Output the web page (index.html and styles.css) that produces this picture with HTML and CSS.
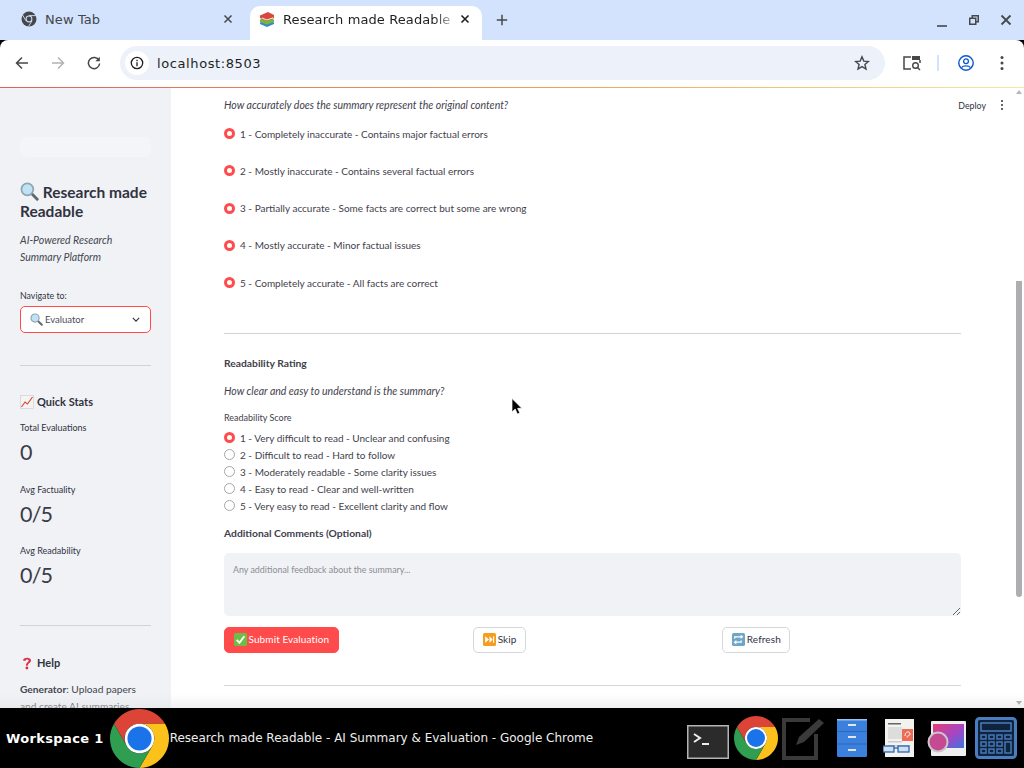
FILE: index.html
```html
<!DOCTYPE html>
<html lang="en">
<head>
<meta charset="utf-8">
<title>Research made Readable</title>
<link rel="stylesheet" href="styles.css">
</head>
<body>
<svg class="defs" width="0" height="0" aria-hidden="true">
  <symbol id="chrome" viewBox="2 2 44 44">
    <path fill="#db4437" d="M4.95 13A22 22 0 0 1 43.05 13H24A11 11 0 0 0 14.47 29.5Z"/>
    <path fill="#fcc11a" d="M43.05 13A22 22 0 0 1 24 46L33.53 29.5A11 11 0 0 0 24 13Z"/>
    <path fill="#2f9e50" d="M4.95 13L14.47 29.5A11 11 0 0 0 33.53 29.5L24 46A22 22 0 0 1 4.95 13Z"/>
    <circle cx="24" cy="24" r="11" fill="#fff"/>
    <circle cx="24" cy="24" r="9" fill="#1a73e8"/>
  </symbol>
  <symbol id="lens" viewBox="0 0 16 16">
    <path d="M9.5 9.5L14.5 14.5" stroke="#5d6a72" stroke-width="2.4" stroke-linecap="round"/>
    <circle cx="6.2" cy="6.2" r="5" fill="#bfe3f5" stroke="#8fa5b0" stroke-width="1.4"/>
  </symbol>
</svg>
<div class="screen">
  <header class="tabstrip">
    <div class="tab">
      <svg class="favicon" viewBox="0 0 16 16"><circle cx="8" cy="8" r="7.5" fill="#45474a"/><circle cx="8" cy="8" r="3.4" fill="#d3e3fd"/><circle cx="8" cy="8" r="2.4" fill="#45474a"/><path d="M8 4.6H15M5 9.8L1.6 4M11 9.8L7.5 15.5" stroke="#d3e3fd" stroke-width=".9"/></svg>
      <span class="tab-title">New Tab</span>
      <svg class="tab-x" viewBox="0 0 10 10"><path d="M1.5 1.5L8.5 8.5M8.5 1.5L1.5 8.5" stroke="#45474a" stroke-width="1.5"/></svg>
    </div>
    <div class="tab tab-active">
      <svg class="favicon" viewBox="0 0 16 16"><path fill="#2f8fc4" d="M1 11.5L8 9l7 2.5V13l-7 3-7-3z"/><path fill="#7cb342" d="M1 8.5L8 6l7 2.5V11l-7 2.5L1 11z"/><path fill="#d8473b" d="M1 4.5L9 1l6 3v3l-7 3-7-3z"/><path fill="#eee" d="M3 6.6l5 2 6-2.400v1l-6 2.400-5-2z"/></svg>
      <span class="tab-title tab-title-fade">Research made Readable</span>
      <svg class="tab-x" viewBox="0 0 10 10"><path d="M1.500 1.500L8.500 8.500M8.500 1.500L1.500 8.500" stroke="#1f1f1f" stroke-width="1.600"/></svg>
    </div>
    <svg class="newtab" viewBox="0 0 12 12"><path d="M6 .8V11.200M.8 6H11.200" stroke="#45474a" stroke-width="1.500"/></svg>
    <div class="winctl">
      <svg viewBox="0 0 12 12"><path d="M1 12H11" stroke="#45474a" stroke-width="1.600"/></svg>
      <svg viewBox="0 0 12 12"><path d="M3.500 1H11V8.500H8.500V11H1V3.500H3.500ZM5 2.500V3.500H8.500V7H9.500V2.500ZM2.500 5V9.500H7V5Z" fill="#45474a" fill-rule="evenodd"/></svg>
      <svg viewBox="0 0 12 12"><path d="M1.500 1.500L10.500 10.500M10.500 1.500L1.500 10.500" stroke="#45474a" stroke-width="1.800"/></svg>
    </div>
  </header>

  <nav class="toolbar">
    <svg class="tool" viewBox="0 0 14 14"><path d="M13 7H2M7 1.500L1.500 7 7 12.500" fill="none" stroke="#45474a" stroke-width="1.500"/></svg>
    <svg class="tool" viewBox="0 0 14 14"><path d="M1 7H12M7 1.500L12.500 7 7 12.500" fill="none" stroke="#b0b2b5" stroke-width="1.500"/></svg>
    <svg class="tool" viewBox="0 0 14 14"><path d="M12 4.500A5.600 5.600 0 1 0 12.600 7.500" fill="none" stroke="#45474a" stroke-width="1.500"/><path d="M12.800 .8V5.300H8.300Z" fill="#45474a"/></svg>
    <div class="omnibox">
      <span class="info"><svg viewBox="0 0 14 14"><circle cx="7" cy="7" r="5.700" fill="none" stroke="#1f1f1f" stroke-width="1.300"/><path d="M7 6.200V10.200M7 3.800V5.200" stroke="#1f1f1f" stroke-width="1.300"/></svg></span>
      <span class="url">localhost:8503</span>
      <svg class="star" viewBox="0 0 16 16"><path d="M8 1.800L9.800 6.100 14.400 6.500 10.900 9.500 12 14 8 11.600 4 14 5.100 9.500 1.600 6.500 6.200 6.100Z" fill="none" stroke="#45474a" stroke-width="1.400"/></svg>
    </div>
    <svg class="tool-cast" viewBox="0 0 18 16"><path d="M8 2H1V14H8" fill="none" stroke="#45474a" stroke-width="1.500"/><path d="M9 1H17V5H9Z" fill="#45474a"/><path d="M17 5V8" stroke="#45474a" stroke-width="1.500"/><circle cx="12.500" cy="10.500" r="2.800" fill="none" stroke="#45474a" stroke-width="1.400"/><path d="M14.500 12.500L17 15" stroke="#45474a" stroke-width="1.400"/></svg>
    <span class="tool-sep"></span>
    <svg class="tool-avatar" viewBox="0 0 16 16"><circle cx="8" cy="8" r="7.200" fill="none" stroke="#0b57d0" stroke-width="1.400"/><circle cx="8" cy="6.300" r="2.400" fill="none" stroke="#0b57d0" stroke-width="1.300"/><path d="M3.500 12.600C5 10.400 11 10.400 12.500 12.600" fill="none" stroke="#0b57d0" stroke-width="1.300"/></svg>
    <svg class="tool-menu" viewBox="0 0 4 16"><circle cx="2" cy="2.500" r="1.500" fill="#45474a"/><circle cx="2" cy="8" r="1.500" fill="#45474a"/><circle cx="2" cy="13.500" r="1.500" fill="#45474a"/></svg>
  </nav>

  <div class="viewport">
    <div class="decoration"></div>
    <aside class="sidebar">
      <div class="skeleton"></div>
      <h1 class="brand"><svg class="emoji-lg"><use href="#lens"/></svg> Research made Readable</h1>
      <p class="tagline">AI-Powered Research Summary Platform</p>
      <div class="field-label">Navigate to:</div>
      <div class="select">
        <svg class="emoji"><use href="#lens"/></svg>
        <span class="select-value">Evaluator</span>
        <svg class="chev" viewBox="0 0 10 6"><path d="M1 1L5 5 9 1" fill="none" stroke="#31333f" stroke-width="1.400"/></svg>
      </div>
      <hr class="rule side-rule-a">
      <h2 class="side-head side-head-stats"><svg class="emoji-md" viewBox="0 0 14 14"><rect x=".5" y=".5" width="13" height="13" fill="#f4f4f4" stroke="#ccc" stroke-width=".6"/><path d="M1.500 12L5 7 7.500 9 12.500 2" fill="none" stroke="#e0483c" stroke-width="1.200"/></svg> Quick Stats</h2>
      <div class="metric"><div class="metric-label">Total Evaluations</div><div class="metric-value">0</div></div>
      <div class="metric"><div class="metric-label">Avg Factuality</div><div class="metric-value">0/5</div></div>
      <div class="metric"><div class="metric-label">Avg Readability</div><div class="metric-value">0/5</div></div>
      <hr class="rule side-rule-b">
      <h2 class="side-head side-head-help"><svg class="emoji-md" viewBox="0 0 14 14"><path d="M3 4.500C3 1 11 .5 11 4.500 11 7 7.800 7 7.800 9.800H6C6 6.500 8.600 6.500 8.600 4.600 8.600 3 5.500 3 5.300 5Z" fill="#dd2e44"/><circle cx="6.900" cy="12" r="1.400" fill="#dd2e44"/></svg> Help</h2>
      <p class="help"><b>Generator</b>: Upload papers and create AI summaries</p>
    </aside>

    <main class="main">
      <div class="topbar"><span>Deploy</span><svg viewBox="0 0 4 12"><circle cx="2" cy="2" r="1" fill="#31333f"/><circle cx="2" cy="6" r="1" fill="#31333f"/><circle cx="2" cy="10" r="1" fill="#31333f"/></svg></div>
      <div class="content">
        <p class="question">How accurately does the summary represent the original content?</p>
        <ul class="radios radios-loose">
          <li><span class="radio radio-on"></span>1 - Completely inaccurate - Contains major factual errors</li>
          <li><span class="radio radio-on"></span>2 - Mostly inaccurate - Contains several factual errors</li>
          <li><span class="radio radio-on"></span>3 - Partially accurate - Some facts are correct but some are wrong</li>
          <li><span class="radio radio-on"></span>4 - Mostly accurate - Minor factual issues</li>
          <li><span class="radio radio-on"></span>5 - Completely accurate - All facts are correct</li>
        </ul>
        <hr class="rule main-rule-a">
        <h3 class="section">Readability Rating</h3>
        <p class="question question-b">How clear and easy to understand is the summary?</p>
        <div class="score-label">Readability Score</div>
        <ul class="radios radios-tight">
          <li><span class="radio radio-on"></span>1 - Very difficult to read - Unclear and confusing</li>
          <li><span class="radio"></span>2 - Difficult to read - Hard to follow</li>
          <li><span class="radio"></span>3 - Moderately readable - Some clarity issues</li>
          <li><span class="radio"></span>4 - Easy to read - Clear and well-written</li>
          <li><span class="radio"></span>5 - Very easy to read - Excellent clarity and flow</li>
        </ul>
        <h3 class="section section-comments">Additional Comments (Optional)</h3>
        <textarea class="comments" placeholder="Any additional feedback about the summary..."></textarea>
        <div class="actions">
          <div><button class="btn btn-primary"><svg class="emoji" viewBox="0 0 12 12"><rect width="12" height="12" rx="1.500" fill="#6cbf45"/><path d="M2.500 6.300L5 9 9.500 3" fill="none" stroke="#fff" stroke-width="1.800"/></svg>Submit Evaluation</button></div>
          <div><button class="btn"><svg class="emoji" viewBox="0 0 12 12"><rect width="12" height="12" rx="1.500" fill="#f59d1e"/><path d="M2 3L5.500 6 2 9ZM6 3L9 6 6 9Z" fill="#fff"/><path d="M9.800 3V9" stroke="#fff" stroke-width="1"/></svg>Skip</button></div>
          <div><button class="btn"><svg class="emoji" viewBox="0 0 12 12"><rect width="12" height="12" rx="1.500" fill="#6fa6c7"/><path d="M2.500 5V3.500H8.500M8.500 7V8.500H3.500" fill="none" stroke="#fff" stroke-width="1.200"/><path d="M8 1.500L10.500 3.500 8 5.500ZM4 6.500L1.500 8.500 4 10.500Z" fill="#fff"/></svg>Refresh</button></div>
        </div>
        <hr class="rule main-rule-b">
      </div>
      <div class="scrollbar">
        <span class="arrow arrow-up"></span>
        <span class="thumb"></span>
        <span class="arrow arrow-down"></span>
      </div>
    </main>
    <div class="fade"></div>
    <svg class="cursor" viewBox="0 0 11 17"><path d="M1 .5V14L4.200 11 6.400 16 8.800 15 6.600 10.300H10.800Z" fill="#000" stroke="#fff" stroke-width=".7"/></svg>
  </div>

  <footer class="taskbar">
    <span class="workspace">Workspace 1</span>
    <svg class="task-chrome"><use href="#chrome"/></svg>
    <span class="task-title">Research made Readable - AI Summary &amp; Evaluation - Google Chrome</span>
    <div class="dock">
      <svg class="d-term" viewBox="0 0 42 34"><rect x=".5" y=".5" width="41" height="33" rx="1" fill="#2b2b2b" stroke="#b4b4b4" stroke-width="2"/><path d="M7 9L13 13 7 17" fill="none" stroke="#eee" stroke-width="2"/><path d="M15 19H22" stroke="#eee" stroke-width="2"/></svg>
      <svg class="d-chrome"><use href="#chrome"/></svg>
      <svg class="d-note" viewBox="0 0 44 44"><path d="M28 4H2V42H34V18" fill="none" stroke="#3a3a3a" stroke-width="4"/><path d="M14 29L17 21 37 3 42 7 22 26Z" fill="#3a3a3a"/></svg>
      <svg class="d-files" viewBox="0 0 30 38"><rect width="30" height="38" rx="1.500" fill="#3a80dc"/><rect y="0" width="30" height="1.500" fill="#9cc1f0"/><path d="M0 12.500H30M0 25H30" stroke="#2a68bd" stroke-width="1"/><rect x="11" y="5" width="8" height="2" fill="#dfe6ee"/><rect x="11" y="17" width="8" height="2" fill="#dfe6ee"/><rect x="11" y="30" width="8" height="2" fill="#dfe6ee"/></svg>
      <svg class="d-doc" viewBox="0 0 32 38"><rect x="2" width="29" height="38" fill="#f2f2ef"/><rect x="5" y="4" width="13" height="1.500" fill="#666"/><rect x="5" y="8" width="14" height="12" fill="#ddd"/><rect x="19" y="10" width="11" height="12" fill="#ee6b55"/><path d="M22 17C22 12 27 12 27 15 27 17 23 17 24 18.500" fill="none" stroke="#fff" stroke-width="1"/><rect x="5" y="22" width="14" height="1.500" fill="#ccc"/><rect x="5" y="26" width="22" height="1.500" fill="#ccc"/><rect x="0" y="27" width="11" height="6" fill="#cfe0f2" stroke="#2d64b0" stroke-width="1.300"/><rect x="15" y="27" width="11" height="6" fill="#cfe0f2" stroke="#2d64b0" stroke-width="1.300"/><path d="M11 29H15" stroke="#2d64b0" stroke-width="1.300"/></svg>
      <svg class="d-image" viewBox="0 0 39 36"><defs><linearGradient id="imgbg" x1="0" y1="0" x2="1" y2="1"><stop offset="0" stop-color="#e63d76"/><stop offset=".55" stop-color="#a546c4"/><stop offset="1" stop-color="#3a74de"/></linearGradient></defs><rect x="4" y="1" width="35" height="35" rx="1" fill="#f0f0f0"/><rect x="6" y="4" width="31" height="24" fill="url(#imgbg)"/><circle cx="11" cy="22" r="10.500" fill="#c9c9c9"/><circle cx="11" cy="22" r="8.500" fill="#c54a92"/></svg>
      <svg class="d-calc" viewBox="0 0 42 42"><rect x="1.500" y="1.500" width="39" height="39" rx="3" fill="#10233d" stroke="#4a7cc0" stroke-width="3"/><rect x="6" y="6" width="30" height="8" fill="none" stroke="#4a7cc0" stroke-width="1.500"/><g fill="none" stroke="#4a7cc0" stroke-width="1.400"><rect x="6" y="18" width="5" height="4"/><rect x="14" y="18" width="5" height="4"/><rect x="22" y="18" width="5" height="4"/><rect x="30" y="18" width="6" height="4"/><rect x="6" y="25" width="5" height="4"/><rect x="14" y="25" width="5" height="4"/><rect x="22" y="25" width="5" height="4"/><rect x="30" y="25" width="6" height="11"/><rect x="6" y="32" width="5" height="4"/><rect x="14" y="32" width="5" height="4"/><rect x="22" y="32" width="5" height="4"/></g></svg>
    </div>
  </footer>
</div>
</body>
</html>
```

FILE: styles.css
```css
* { box-sizing: border-box; }
html, body { margin: 0; padding: 0; overflow: hidden; }
.defs { position: absolute; }
.screen { width: 1024px; height: 768px; display: flex; flex-direction: column; overflow: hidden; background: #000; font-family: "Lato", "Liberation Sans", sans-serif; }

/* tab strip */
.tabstrip { height: 40px; flex: none; background: #d3e3fd; display: flex; align-items: flex-end; padding-left: 8px; font-family: "DejaVu Sans", sans-serif; }
.tab { width: 234px; height: 34px; display: flex; align-items: center; padding: 0 5px 8px 13px; border-radius: 10px 10px 0 0; color: #45474a; font-size: 13px; letter-spacing: .1px; }
.tab-active { width: 232px; margin-left: 8px; background: #fff; color: #1f1f1f; padding: 0 8px 8px 9px; }
.favicon { width: 16px; height: 16px; flex: none; margin-right: 8px; }
.tab-title { flex: 1; white-space: nowrap; overflow: hidden; }
.tab-title-fade { -webkit-mask-image: linear-gradient(90deg, #000 85%, transparent 100%); mask-image: linear-gradient(90deg, #000 85%, transparent 100%); }
.tab-x { width: 10px; height: 10px; flex: none; margin-right: 4px; }
.newtab { width: 12px; height: 12px; margin: 0 0 14px 14px; }
.winctl { margin-left: auto; display: flex; gap: 20px; padding: 0 12px 14px 0; }
.winctl svg { width: 12px; height: 12px; display: block; overflow: visible; }

/* toolbar */
.toolbar { height: 47px; flex: none; background: #fff; border-radius: 8px 8px 0 0; display: flex; align-items: center; padding: 0 16px 1px 15px; }
.tool { width: 14px; height: 14px; flex: none; margin-right: 22px; }
.omnibox { width: 765px; height: 34px; margin-left: -3px; border-radius: 17px; background: #ecf1fa; display: flex; align-items: center; padding: 0 15px 0 5px; }
.info { width: 24px; height: 24px; border-radius: 50%; background: #fff; display: flex; align-items: center; justify-content: center; flex: none; }
.info svg { width: 14px; height: 14px; }
.url { margin-left: 8px; flex: 1; font: 13px "DejaVu Sans", sans-serif; letter-spacing: .6px; color: #1f1f1f; }
.star { width: 16px; height: 16px; flex: none; }
.tool-cast { width: 18px; height: 16px; margin-left: 18px; flex: none; }
.tool-sep { width: 2px; height: 16px; background: #d3e3fd; margin-left: 16px; flex: none; }
.tool-avatar { width: 16px; height: 16px; margin-left: 19px; flex: none; }
.tool-menu { width: 4px; height: 16px; margin-left: 26px; flex: none; }

/* page */
.viewport { height: 621px; flex: none; display: flex; position: relative; background: #fff; overflow: hidden; }
.decoration { position: absolute; left: 0; right: 0; top: 0; height: 1px; z-index: 2; background: linear-gradient(90deg, #e0605c, #eda25e 55%, #f5ea9e); }
.sidebar { width: 171px; flex: none; background: #f0f2f6; padding: 50px 20px 0; color: #31333f; }
.skeleton { height: 20px; border-radius: 6px; background: #f3f5f9; }
.brand { margin: 25px 0 0; font-size: 15.500px; line-height: 19px; font-weight: 700; }
.emoji-lg { width: 19px; height: 19px; vertical-align: -3px; }
.tagline { margin: 11px 0 0; font-size: 10.500px; font-style: italic; line-height: 17px; color: #44464f; }
.field-label { margin-top: 24px; font-size: 8.800px; line-height: 12px; }
.select { height: 27px; margin-top: 4px; background: #fff; border: 1px solid #ff4b4b; border-radius: 5px; display: flex; align-items: center; padding: 0 10px 0 9px; font-size: 9.500px; color: #4a4c57; }
.emoji { width: 13px; height: 13px; flex: none; }
.select-value { flex: 1; margin-left: 2px; }
.chev { width: 8px; height: 5px; }
.rule { border: 0; height: 1px; margin: 0; background: #d2d3d8; }
.side-rule-a { margin-top: 32px; }
.side-head { margin: 0; font-size: 11px; line-height: 14px; font-weight: 700; display: flex; align-items: center; gap: 3px; }
.emoji-md { width: 14px; height: 14px; flex: none; }
.side-head-stats { margin-top: 29px; }
.metric { margin-top: 13px; }
.metric + .metric { margin-top: 15.500px; }
.metric-label { font-size: 9px; line-height: 12px; }
.metric-value { font-size: 21.500px; letter-spacing: -.8px; line-height: 31px; margin-top: 3px; color: #3a3c47; }
.side-rule-b { margin-top: 34px; }
.side-head-help { margin-top: 30px; }
.help { margin: 11px 0 0; font-size: 10.200px; line-height: 17px; color: #44464f; }

.main { flex: 1; position: relative; display: flex; }
.topbar { position: absolute; top: 12px; right: 20px; display: flex; align-items: center; gap: 14px; font-size: 8.800px; color: #31333f; }
.topbar svg { width: 4px; height: 12px; }
.content { flex: 1; padding: 12px 53px 0; color: #3f414c; }
.scrollbar { width: 10px; flex: none; background: #fff; position: relative; }
.thumb { position: absolute; top: 194px; left: 2px; width: 6px; height: 316px; background: #adadb2; border-radius: 0 0 3px 3px; }
.arrow { position: absolute; left: 1.500px; width: 0; height: 0; border-left: 3.500px solid transparent; border-right: 3.500px solid transparent; }
.arrow-up { top: 3px; border-bottom: 4px solid #b6b6b6; }
.arrow-down { bottom: 3px; border-top: 4px solid #9a9a9a; }
.question { margin: 0; font-size: 10.500px; line-height: 12px; font-style: italic; }
.question-b { margin-top: 16px; }
.radios { list-style: none; margin: 0; padding: 0; font-size: 10px; }
.radios li { display: flex; align-items: center; gap: 5px; height: 17px; }
.radios-loose { margin-top: 14px; }
.radios-loose li { margin-bottom: 20.300px; }
.radios-tight { margin-top: 5px; }
.radio { width: 11px; height: 11px; border-radius: 50%; border: 1px solid #a6a7ac; background: #fff; flex: none; }
.radio-on { background: #fff; border: 3.500px solid #ff4b4b; }
.main-rule-a { margin-top: 42px; }
.section { margin: 0; font-size: 10.300px; line-height: 12px; font-weight: 700; }
.main-rule-a + .section { margin-top: 23px; }
.score-label { margin-top: 15px; font-size: 9px; line-height: 12px; }
.section-comments { margin-top: 13px; }
.comments { display: block; width: 100%; height: 63px; margin-top: 14px; border: 0; border-radius: 5px; background: #f0f2f6; padding: 11px 9px; font: 8.900px "Lato", sans-serif; color: #31333f; outline: 0; }
.comments::placeholder { color: #8c8d94; }
.actions { display: grid; grid-template-columns: repeat(3, 1fr); gap: 10.500px; margin-top: 11px; }
.btn { height: 26px; display: inline-flex; align-items: center; gap: 2px; padding: 0 8.500px 2px; background: #fff; border: 1px solid #d5d6da; border-radius: 5px; color: #31333f; font: 10px "Lato", sans-serif; letter-spacing: .1px; }
.btn-primary { background: #ff4b4b; border-color: #ff4b4b; color: #fff; }
.main-rule-b { margin-top: 32px; background: #d8d8db; }
.fade { position: absolute; left: 0; right: 0; bottom: 0; height: 14px; background: linear-gradient(180deg, rgba(225,225,225,0), rgba(225,225,225,.5)); pointer-events: none; }
.cursor { position: absolute; left: 511px; top: 311px; width: 11px; height: 17px; }

/* taskbar */
.taskbar { height: 60px; flex: none; background: #000; display: flex; align-items: center; padding-left: 6px; color: #fff; font-family: "DejaVu Sans", sans-serif; }
.workspace { font-size: 13px; font-weight: 700; letter-spacing: .35px; white-space: nowrap; }
.task-chrome { width: 59px; height: 59px; margin: 0 0 0 6px; flex: none; align-self: flex-end; }
.task-title { margin-left: 1px; font-size: 12px; white-space: nowrap; color: #eee; }
.dock { margin-left: auto; display: flex; align-items: center; padding-right: 7px; }
.d-term { width: 42px; height: 34px; margin-top: 8px; }
.d-chrome { width: 44px; height: 44px; margin-left: 5px; }
.d-note { width: 44px; height: 44px; margin-left: 4px; }
.d-files { width: 30px; height: 38px; margin-left: 11px; }
.d-doc { width: 32px; height: 38px; margin-left: 16px; }
.d-image { width: 39px; height: 36px; margin-left: 12px; }
.d-calc { width: 42px; height: 42px; margin-left: 9px; }
```
